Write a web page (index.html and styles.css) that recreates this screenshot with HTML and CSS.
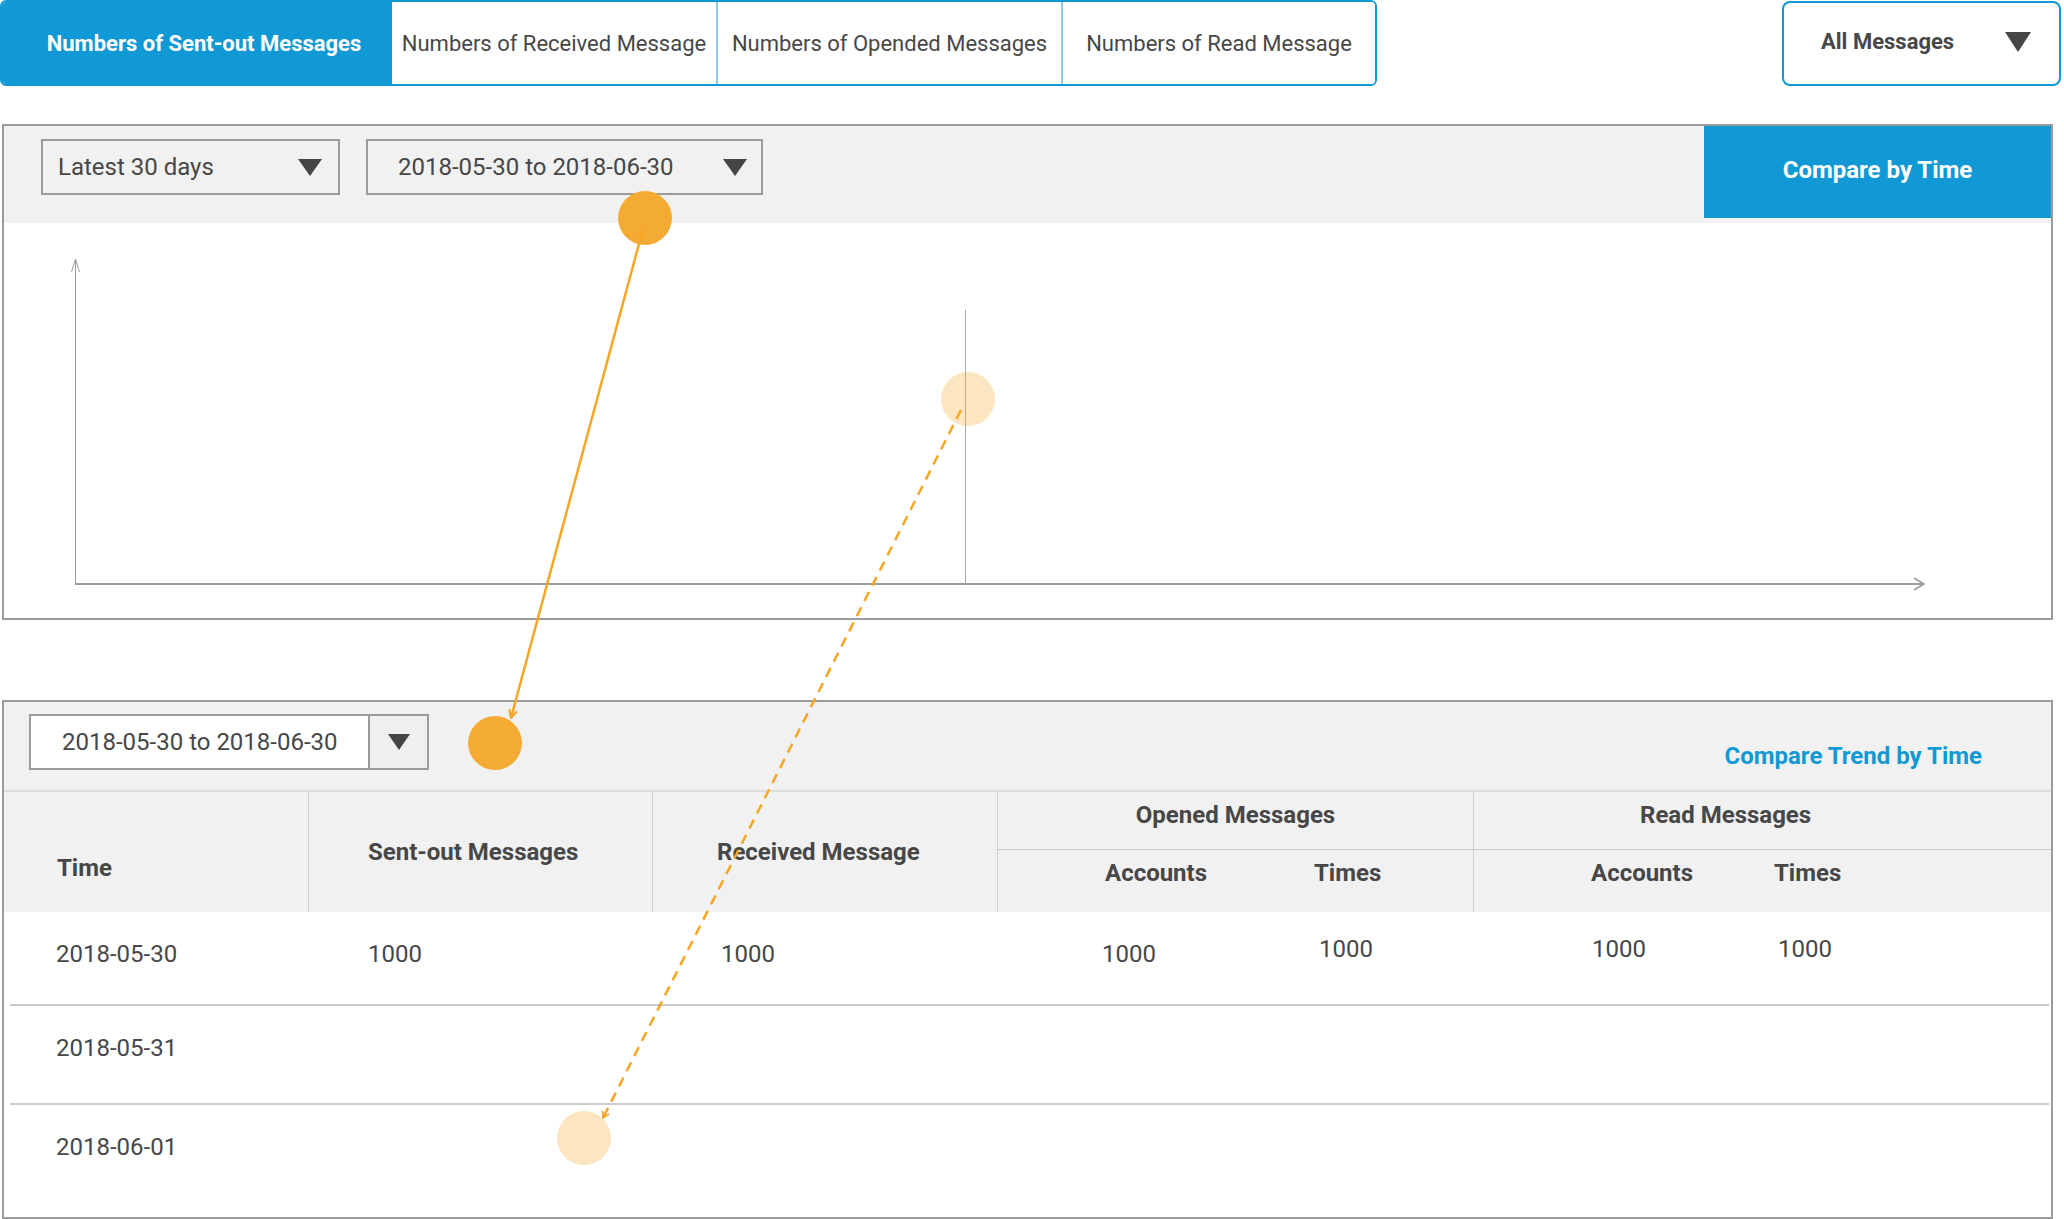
FILE: index.html
```html
<!DOCTYPE html>
<html lang="en">
<head>
<meta charset="utf-8">
<title>Message statistics</title>
<link rel="stylesheet" href="styles.css">
</head>
<body>
<div class="page">
  <header class="top-bar">
    <nav class="tabs">
      <div class="tab tab-active">Numbers of Sent-out Messages</div>
      <div class="tab">Numbers of Received Message</div>
      <div class="tab tab-divided">Numbers of Opended Messages</div>
      <div class="tab tab-divided">Numbers of Read Message</div>
    </nav>
    <div class="msg-select">
      <span>All Messages</span>
      <svg class="caret-lg" viewBox="0 0 26 20"><polygon points="0,0 26,0 13,20"/></svg>
    </div>
  </header>

  <section class="chart-panel">
    <div class="chart-toolbar">
      <div class="select select-range">
        <span>Latest 30 days</span>
        <svg class="caret" viewBox="0 0 24 17"><polygon points="0,0 24,0 12,17"/></svg>
      </div>
      <div class="select select-dates">
        <span>2018-05-30 to 2018-06-30</span>
        <svg class="caret" viewBox="0 0 24 17"><polygon points="0,0 24,0 12,17"/></svg>
      </div>
      <button class="btn-compare">Compare by Time</button>
    </div>
    <div class="chart-area">
      <svg class="chart-svg" width="2047" height="395" viewBox="0 0 2047 395">
        <line x1="71.5" y1="37" x2="71.5" y2="361" stroke="#9b9b9b" stroke-width="1"/>
        <polyline points="67.5,49 71.5,36 75.5,49" fill="none" stroke="#9b9b9b" stroke-width="1"/>
        <line x1="71" y1="361" x2="1920" y2="361" stroke="#9b9b9b" stroke-width="2"/>
        <polyline points="1910,355 1920,361 1910,367" fill="none" stroke="#9b9b9b" stroke-width="1.5"/>
        <line x1="961.5" y1="87" x2="961.5" y2="360" stroke="#a8a8a8" stroke-width="1"/>
      </svg>
    </div>
  </section>

  <section class="table-panel">
    <div class="table-toolbar">
      <div class="date-select">
        <span class="date-value">2018-05-30 to 2018-06-30</span>
        <span class="date-btn"><svg class="caret-sm" viewBox="0 0 22 16"><polygon points="0,0 22,0 11,16"/></svg></span>
      </div>
      <span class="trend-link">Compare Trend by Time</span>
    </div>

    <div class="thead">
      <div class="th h-time">Time</div>
      <div class="th h-sent">Sent-out Messages</div>
      <div class="th h-recv">Received Message</div>
      <div class="th h-opened">Opened Messages</div>
      <div class="th h-read">Read Messages</div>
      <div class="th h-sub h-acc1">Accounts</div>
      <div class="th h-sub h-times1">Times</div>
      <div class="th h-sub h-acc2 h-group-start">Accounts</div>
      <div class="th h-sub h-times2">Times</div>
    </div>

    <div class="tbody">
      <div class="row row-1">
        <div class="td c-time">2018-05-30</div>
        <div class="td c-sent">1000</div>
        <div class="td c-recv">1000</div>
        <div class="td c-oacc">1000</div>
        <div class="td c-otimes up">1000</div>
        <div class="td c-racc up">1000</div>
        <div class="td c-rtimes up">1000</div>
      </div>
      <div class="row row-2">
        <div class="td c-time">2018-05-31</div>
      </div>
      <div class="row row-3">
        <div class="td c-time">2018-06-01</div>
      </div>
    </div>
  </section>

  <svg class="annotations" width="2064" height="1219" viewBox="0 0 2064 1219">
    <defs>
      <marker id="arrow-solid" viewBox="0 0 10 10" refX="9" refY="5" markerWidth="10" markerHeight="10" markerUnits="userSpaceOnUse" orient="auto">
        <path d="M1,1 L9,5 L1,9" fill="none" stroke="#f5a623" stroke-width="2"/>
      </marker>
      <marker id="arrow-dash" viewBox="0 0 10 10" refX="9" refY="5" markerWidth="9" markerHeight="9" markerUnits="userSpaceOnUse" orient="auto">
        <path d="M2,1 L9,5 L2,9" fill="none" stroke="#f5a623" stroke-width="2"/>
      </marker>
    </defs>
    <circle cx="645" cy="218" r="27" fill="#f4ab34"/>
    <circle cx="495" cy="743" r="27" fill="#f4ab34"/>
    <circle cx="968" cy="399" r="27" fill="#f5ab33" fill-opacity="0.3"/>
    <circle cx="584" cy="1138" r="27" fill="#f5ab33" fill-opacity="0.3"/>
    <line x1="643" y1="229" x2="511" y2="718" stroke="#f5a623" stroke-width="2.5" marker-end="url(#arrow-solid)"/>
    <line x1="961" y1="410" x2="603" y2="1118" stroke="#f5a623" stroke-width="2.5" stroke-dasharray="10 7" marker-end="url(#arrow-dash)"/>
  </svg>
</div>
</body>
</html>
```

FILE: styles.css
```css
* { box-sizing: border-box; }

html, body {
  margin: 0;
  padding: 0;
  background: #fff;
}

body {
  font-family: Roboto, "Liberation Sans", Arial, sans-serif;
  color: #474747;
}

.page {
  position: relative;
  width: 2064px;
  height: 1219px;
  overflow: hidden;
}

/* ---------- top bar ---------- */
.top-bar {
  display: flex;
  justify-content: space-between;
  align-items: flex-start;
  height: 86px;
  padding-right: 3px;
}

.tabs {
  display: grid;
  grid-template-columns: 390px 324px 345px 314px;
  height: 86px;
  border: 2px solid #1099d4;
  border-radius: 6px;
  overflow: hidden;
}

.tab {
  display: flex;
  align-items: center;
  justify-content: center;
  font-size: 22px;
  color: #474747;
  background: #fff;
  white-space: nowrap;
}

.tab-active {
  background: #1099d4;
  color: #fff;
  font-weight: 700;
  padding-left: 14px;
}

.tab-divided {
  border-left: 2px solid #8ccbec;
}

.msg-select {
  width: 279px;
  height: 85px;
  margin-top: 1px;
  border: 2px solid #1099d4;
  border-radius: 8px;
  display: flex;
  align-items: center;
  justify-content: space-between;
  padding: 0 28px 4px 37px;
  font-size: 22px;
  font-weight: 700;
  color: #474747;
}

.caret-lg {
  width: 26px;
  height: 20px;
  fill: #454545;
}

/* ---------- chart panel ---------- */
.chart-panel {
  width: 2051px;
  height: 496px;
  margin: 38px 0 0 2px;
  border: 2px solid #9b9b9b;
  display: flex;
  flex-direction: column;
}

.chart-toolbar {
  height: 97px;
  background: #f1f1f1;
  display: flex;
  align-items: flex-start;
  padding-left: 37px;
  gap: 26px;
}

.select {
  margin-top: 13px;
  height: 56px;
  border: 2px solid #9b9b9b;
  display: flex;
  align-items: center;
  justify-content: space-between;
  font-size: 24px;
  color: #474747;
}

.select-range {
  width: 299px;
  padding: 0 16px 0 15px;
}

.select-dates {
  width: 397px;
  padding: 0 14px 0 30px;
}

.caret {
  width: 24px;
  height: 17px;
  fill: #454545;
}

.btn-compare {
  margin-left: auto;
  width: 347px;
  height: 92px;
  border: none;
  background: #1099d4;
  color: #fff;
  font-family: Roboto, "Liberation Sans", Arial, sans-serif;
  font-size: 24px;
  font-weight: 700;
  padding: 0 0 4px 0;
}

.chart-area {
  height: 395px;
}

.chart-svg {
  display: block;
}

/* ---------- table panel ---------- */
.table-panel {
  width: 2051px;
  height: 519px;
  margin: 80px 0 0 2px;
  border: 2px solid #9b9b9b;
  display: flex;
  flex-direction: column;
}

.table-toolbar {
  height: 90px;
  background: #f1f1f1;
  border-bottom: 2px solid #dcdcdc;
  display: flex;
  align-items: flex-start;
  padding: 12px 0 0 25px;
}

.date-select {
  width: 400px;
  height: 56px;
  border: 2px solid #9b9b9b;
  display: flex;
}

.date-value {
  flex: 1;
  background: #fff;
  display: flex;
  align-items: center;
  padding-left: 31px;
  font-size: 24px;
  color: #474747;
}

.date-btn {
  width: 59px;
  border-left: 2px solid #9b9b9b;
  background: #efefef;
  display: flex;
  align-items: center;
  justify-content: center;
}

.caret-sm {
  width: 22px;
  height: 16px;
  fill: #454545;
}

.trend-link {
  margin: 28px 69px 0 auto;
  font-size: 24px;
  font-weight: 700;
  color: #1099d4;
  line-height: 28px;
}

.thead {
  height: 120px;
  background: #f1f1f1;
  display: grid;
  grid-template-columns: 304px 344px 345px 238px 238px 289px 289px;
  grid-template-rows: 58px 62px;
}

.th {
  display: flex;
  align-items: center;
  font-size: 24px;
  font-weight: 700;
  color: #474747;
  white-space: nowrap;
}

.h-time {
  grid-column: 1;
  grid-row: 1 / 3;
  padding: 32px 0 0 53px;
}

.h-sent {
  grid-column: 2;
  grid-row: 1 / 3;
  border-left: 1px solid #cfcfcf;
  padding-left: 59px;
}

.h-recv {
  grid-column: 3;
  grid-row: 1 / 3;
  border-left: 1px solid #cfcfcf;
  padding-left: 64px;
}

.h-opened {
  grid-column: 4 / 6;
  grid-row: 1;
  border-left: 1px solid #cfcfcf;
  border-bottom: 1px solid #c8c8c8;
  justify-content: center;
  padding-bottom: 12px;
}

.h-read {
  grid-column: 6 / 8;
  grid-row: 1;
  border-left: 1px solid #cfcfcf;
  border-bottom: 1px solid #c8c8c8;
  padding: 0 0 12px 166px;
}

.h-sub {
  grid-row: 2;
  padding-bottom: 16px;
}

.h-acc1 {
  grid-column: 4;
  border-left: 1px solid #cfcfcf;
  padding-left: 107px;
}

.h-times1 {
  grid-column: 5;
  padding-left: 79px;
}

.h-acc2 {
  grid-column: 6;
  border-left: 1px solid #cfcfcf;
  padding-left: 117px;
}

.h-times2 {
  grid-column: 7;
  padding-left: 12px;
}

.tbody {
  display: flex;
  flex-direction: column;
}

.row {
  display: grid;
  grid-template-columns: 298px 344px 345px 238px 238px 289px 287px;
  margin: 0 2px 0 6px;
  align-items: start;
}

.row-1 {
  height: 94px;
  border-bottom: 2px solid #cbcbcb;
}

.row-2 {
  height: 99px;
  border-bottom: 2px solid #cbcbcb;
}

.row-3 {
  height: 112px;
}

.td {
  padding-top: 28px;
  line-height: 28px;
  font-size: 24px;
  color: #474747;
}

.td.up {
  padding-top: 23px;
}

.c-time { grid-column: 1; padding-left: 46px; }
.c-sent { grid-column: 2; padding-left: 60px; }
.c-recv { grid-column: 3; padding-left: 69px; }
.c-oacc { grid-column: 4; padding-left: 105px; }
.c-otimes { grid-column: 5; padding-left: 84px; }
.c-racc { grid-column: 6; padding-left: 119px; }
.c-rtimes { grid-column: 7; padding-left: 16px; }

/* ---------- annotation overlay ---------- */
.annotations {
  position: absolute;
  top: 0;
  left: 0;
  pointer-events: none;
}
```
